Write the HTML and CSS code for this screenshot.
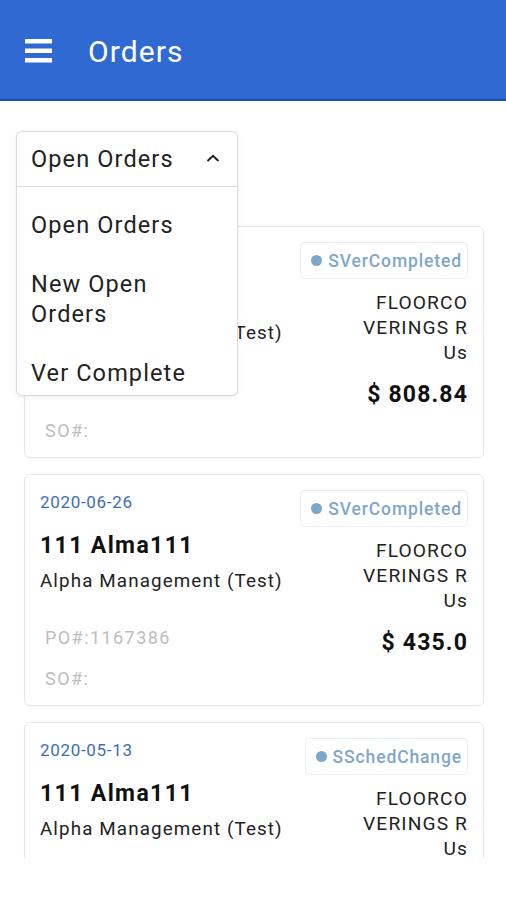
FILE: index.html
```html
<!DOCTYPE html>
<html lang="en">
<head>
    <meta charset="UTF-8">
    <meta name="viewport" content="width=device-width, initial-scale=1.0">
    <title>Orders</title>
    <link rel="stylesheet" href="styles.css">
</head>
<body>
    <header class="appbar">
        <svg class="menu-icon" width="28" height="26" viewBox="0 0 28 26">
            <rect x="0" y="1" width="27" height="4.5" fill="#fff"/>
            <rect x="0" y="10.5" width="27" height="4.5" fill="#fff"/>
            <rect x="0" y="20" width="27" height="4.5" fill="#fff"/>
        </svg>
        <h1>Orders</h1>
    </header>

    <div class="filter">
        <div class="select">
            <div class="select-head">
                <span>Open Orders</span>
                <svg class="chevron" width="14" height="8" viewBox="0 0 14 8">
                    <polyline points="1.5,7 7,1.8 12.5,7" fill="none" stroke="#222" stroke-width="2"/>
                </svg>
            </div>
            <ul class="select-menu">
                <li>Open Orders</li>
                <li>New Open Orders</li>
                <li>Ver Complete</li>
            </ul>
        </div>
    </div>

    <div class="list">
        <div class="card">
            <div class="col-left">
                <div class="date">2020-06-30</div>
                <div class="title">111 Alma111</div>
                <div class="client">Alpha Management (Test)</div>
                <div class="po">PO#:1167391</div>
                <div class="so">SO#:</div>
            </div>
            <div class="col-right">
                <div class="badge"><span class="dot"></span>SVerCompleted</div>
                <div class="vendor">FLOORCO<wbr>VERINGS R Us</div>
                <div class="price">$ 808.84</div>
            </div>
        </div>

        <div class="card">
            <div class="col-left">
                <div class="date">2020-06-26</div>
                <div class="title">111 Alma111</div>
                <div class="client">Alpha Management (Test)</div>
                <div class="po">PO#:1167386</div>
                <div class="so">SO#:</div>
            </div>
            <div class="col-right">
                <div class="badge"><span class="dot"></span>SVerCompleted</div>
                <div class="vendor">FLOORCO<wbr>VERINGS R Us</div>
                <div class="price">$ 435.0</div>
            </div>
        </div>

        <div class="card">
            <div class="col-left">
                <div class="date">2020-05-13</div>
                <div class="title">111 Alma111</div>
                <div class="client">Alpha Management (Test)</div>
                <div class="po">PO#:1167301</div>
                <div class="so">SO#:</div>
            </div>
            <div class="col-right">
                <div class="badge"><span class="dot"></span>SSchedChange</div>
                <div class="vendor">FLOORCO<wbr>VERINGS R Us</div>
                <div class="price">$ 612.5</div>
            </div>
        </div>
    </div>
</body>
</html>
```

FILE: styles.css
```css
body {
    margin: 0;
    font-family: Roboto, "Liberation Sans", sans-serif;
    letter-spacing: 0.07em;
    background: #fff;
    color: #222;
}
.appbar {
    height: 99px;
    background: #3169d3;
    border-bottom: 2px solid #1e51ad;
    display: flex;
    align-items: center;
    padding-left: 25px;
}
.menu-icon {
    margin-top: 2px;
}
.appbar h1 {
    margin: 4px 0 0 35px;
    font-size: 30px;
    font-weight: 400;
    color: #fff;
}
.filter {
    height: 55px;
    margin: 30px 0 40px;
    position: relative;
}
.select {
    position: absolute;
    top: 0;
    left: 16px;
    width: 220px;
    background: #fff;
    border: 1px solid #dcdcdc;
    border-radius: 6px;
    box-shadow: 0 1px 4px rgba(0,0,0,0.08);
    z-index: 2;
}
.select-head {
    height: 54px;
    display: flex;
    align-items: center;
    justify-content: space-between;
    padding: 0 17px 0 14px;
    font-size: 23.5px;
    border-bottom: 1px solid #dcdcdc;
}
.chevron {
    margin-top: -3px;
}
.select-menu {
    list-style: none;
    margin: 0;
    padding: 8px 0 0;
}
.select-menu li {
    padding: 14.5px 50px 14.5px 14px;
    font-size: 23.5px;
    line-height: 30px;
}
.select-menu li:last-child {
    padding-bottom: 7px;
}
.list {
    height: 632px;
    overflow: hidden;
    padding: 0 22px 0 24px;
}
.card {
    display: flex;
    justify-content: space-between;
    border: 1px solid #e6e6e6;
    border-radius: 6px;
    box-shadow: 0 1px 2px rgba(0,0,0,0.04);
    padding: 15px 15px 14px;
    margin-bottom: 16px;
}
.col-left {
    display: flex;
    flex-direction: column;
}
.date {
    font-size: 17px;
    line-height: 24px;
    letter-spacing: 0.04em;
    color: #3b6db8;
}
.title {
    margin-top: 17px;
    font-size: 23px;
    line-height: 30px;
    font-weight: 700;
    letter-spacing: 0.06em;
    color: #111;
}
.client {
    margin-top: 7px;
    font-size: 18.8px;
    line-height: 26px;
    color: #222;
}
.po, .so {
    margin-left: 5px;
    font-size: 18px;
    line-height: 24px;
    letter-spacing: 0.08em;
    color: #bdbdbd;
}
.po {
    margin-top: 32px;
}
.so {
    margin-top: 17px;
}
.col-right {
    display: flex;
    flex-direction: column;
    align-items: flex-end;
}
.badge {
    display: flex;
    align-items: center;
    height: 35px;
    padding: 0 5px 0 10px;
    border: 1px solid #eceff3;
    border-radius: 4px;
    font-size: 17.5px;
    font-weight: 500;
    letter-spacing: 0.05em;
    color: #7fa7c9;
}
.dot {
    width: 11px;
    height: 11px;
    border-radius: 50%;
    background: #7fa7c9;
    margin-right: 6px;
}
.vendor {
    margin-top: 11px;
    width: 114px;
    text-align: right;
    font-size: 19.2px;
    line-height: 25px;
    color: #222;
}
.price {
    margin-top: 15px;
    font-size: 23px;
    line-height: 30px;
    font-weight: 700;
    letter-spacing: 0.05em;
    color: #111;
}
```
